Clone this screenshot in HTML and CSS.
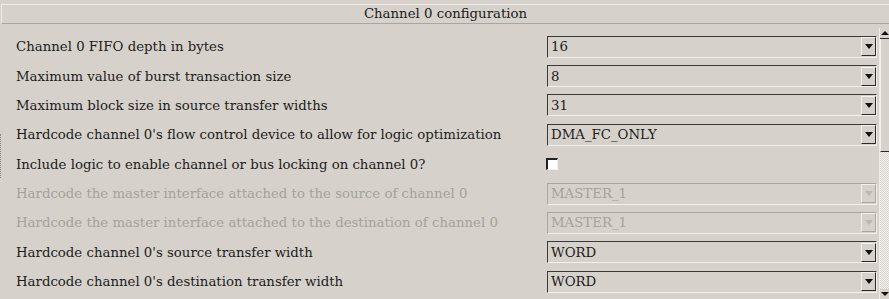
FILE: index.html
```html
<!DOCTYPE html>
<html lang="en">
<head>
    <meta charset="UTF-8">
    <title>Channel 0 configuration</title>
    <link rel="stylesheet" href="styles.css">
</head>
<body>
    <div class="panel">
        <div class="title">Channel 0 configuration</div>
        <div class="content">
            <div class="focus-mark"></div>
            <div class="rows">
                <div class="row">
                    <span class="label">Channel 0 FIFO depth in bytes</span>
                    <div class="select"><span class="value">16</span><span class="button"><span class="arrow"></span></span></div>
                </div>
                <div class="row">
                    <span class="label">Maximum value of burst transaction size</span>
                    <div class="select"><span class="value">8</span><span class="button"><span class="arrow"></span></span></div>
                </div>
                <div class="row">
                    <span class="label">Maximum block size in source transfer widths</span>
                    <div class="select"><span class="value">31</span><span class="button"><span class="arrow"></span></span></div>
                </div>
                <div class="row">
                    <span class="label">Hardcode channel 0's flow control device to allow for logic optimization</span>
                    <div class="select"><span class="value">DMA_FC_ONLY</span><span class="button"><span class="arrow"></span></span></div>
                </div>
                <div class="row">
                    <span class="label">Include logic to enable channel or bus locking on channel 0?</span>
                    <div class="check-cell"><span class="checkbox"></span></div>
                </div>
                <div class="row disabled">
                    <span class="label">Hardcode the master interface attached to the source of channel 0</span>
                    <div class="select"><span class="value">MASTER_1</span><span class="button"><span class="arrow"></span></span></div>
                </div>
                <div class="row disabled">
                    <span class="label">Hardcode the master interface attached to the destination of channel 0</span>
                    <div class="select"><span class="value">MASTER_1</span><span class="button"><span class="arrow"></span></span></div>
                </div>
                <div class="row">
                    <span class="label">Hardcode channel 0's source transfer width</span>
                    <div class="select"><span class="value">WORD</span><span class="button"><span class="arrow"></span></span></div>
                </div>
                <div class="row">
                    <span class="label">Hardcode channel 0's destination transfer width</span>
                    <div class="select"><span class="value">WORD</span><span class="button"><span class="arrow"></span></span></div>
                </div>
            </div>
            <div class="scrollbar">
                <div class="scroll-btn up"></div>
                <div class="thumb"></div>
                <div class="trough"></div>
                <div class="scroll-btn down"></div>
            </div>
        </div>
    </div>
</body>
</html>
```

FILE: styles.css
```css
body {
    margin: 0;
    background-color: #d6d2cb;
    font-family: "DejaVu Serif", serif;
    font-size: 13.3px;
    color: #1c1c1c;
    overflow: hidden;
}
.panel {
    height: 299px;
    padding-top: 4px;
    box-sizing: border-box;
}
.title {
    margin-left: 1px;
    height: 18px;
    line-height: 18px;
    text-align: center;
    border-top: 1px solid #efede9;
    border-left: 1px solid #efede9;
    border-bottom: 1px solid #aaa69f;
}
.content {
    position: relative;
    display: flex;
    margin-top: 4px;
}
.focus-mark {
    position: absolute;
    left: 0;
    top: 106px;
    height: 44px;
    border-left: 1px dotted #8a8781;
}
.rows {
    flex: 1;
    padding-top: 4px;
    padding-left: 16px;
}
.row {
    display: flex;
    align-items: center;
    height: 29.375px;
}
.label {
    flex: 1;
    white-space: nowrap;
}
.select {
    width: 330px;
    height: 22px;
    box-sizing: border-box;
    display: flex;
    align-items: center;
    border-top: 1px solid #3a3a3a;
    border-left: 1px solid #3a3a3a;
    border-bottom: 1px solid #f3f1ed;
    border-right: 1px solid #f3f1ed;
}
.value {
    flex: 1;
    padding-left: 3px;
}
.button {
    width: 15px;
    height: 19px;
    box-sizing: border-box;
    display: flex;
    align-items: center;
    justify-content: center;
    border-top: 1px solid #f3f1ed;
    border-left: 1px solid #f3f1ed;
    border-bottom: 1px solid #2a2a2a;
    border-right: 1px solid #2a2a2a;
}
.arrow {
    width: 0;
    height: 0;
    border-left: 4px solid transparent;
    border-right: 4px solid transparent;
    border-top: 5px solid #111;
}
.check-cell {
    width: 330px;
}
.checkbox {
    display: block;
    width: 12px;
    height: 12px;
    box-sizing: border-box;
    margin-left: -1px;
    background-color: #fff;
    border-top: 2px solid #222;
    border-left: 2px solid #222;
    border-bottom: 1px solid #f3f1ed;
    border-right: 1px solid #f3f1ed;
}
.disabled {
    color: #a5a19b;
}
.disabled .select {
    border-top-color: #aaa69f;
    border-left-color: #aaa69f;
}
.disabled .button {
    border-bottom-color: #aaa69f;
    border-right-color: #aaa69f;
}
.disabled .arrow {
    border-top-color: #bcb8b1;
}
.scrollbar {
    width: 9px;
    flex-shrink: 0;
    margin-left: 2px;
    height: 271px;
    display: flex;
    flex-direction: column;
    border-left: 1px solid #efede9;
}
.scroll-btn {
    height: 10px;
    position: relative;
}
.scroll-btn.up::after {
    content: "";
    position: absolute;
    left: 1px;
    top: 3px;
    border-left: 4px solid transparent;
    border-right: 4px solid transparent;
    border-bottom: 4px solid #111;
}
.scroll-btn.up {
    border-bottom: 1px solid #2a2a2a;
}
.scroll-btn.down::after {
    content: "";
    position: absolute;
    left: 1px;
    top: 3px;
    border-left: 4px solid transparent;
    border-right: 4px solid transparent;
    border-top: 4px solid #111;
}
.thumb {
    height: 112px;
    border-left: 1px solid #f3f1ed;
    border-bottom: 1px solid #2a2a2a;
}
.trough {
    flex: 1;
    background: repeating-conic-gradient(#f4f3f0 0 25%, #d6d2cb 0 50%) 0 0 / 2px 2px;
}
```
